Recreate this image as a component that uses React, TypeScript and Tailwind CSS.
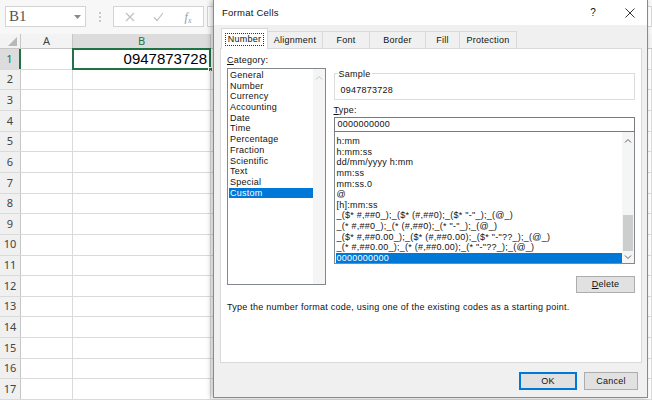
import { FC } from "react";

const font = "font-['Noto_Sans',sans-serif]";
const uiFont = "font-['Liberation_Sans',Arial,sans-serif]";

const categories = [
  "General",
  "Number",
  "Currency",
  "Accounting",
  "Date",
  "Time",
  "Percentage",
  "Fraction",
  "Scientific",
  "Text",
  "Special",
  "Custom",
];

const formats = [
  "h:mm",
  "h:mm:ss",
  "dd/mm/yyyy h:mm",
  "mm:ss",
  "mm:ss.0",
  "@",
  "[h]:mm:ss",
  '_($* #,##0_);_($* (#,##0);_($* "-"_);_(@_)',
  '_(* #,##0_);_(* (#,##0);_(* "-"_);_(@_)',
  '_($* #,##0.00_);_($* (#,##0.00);_($* "-"??_);_(@_)',
  '_(* #,##0.00_);_(* (#,##0.00);_(* "-"??_);_(@_)',
  "0000000000",
];

const tabs = [
  { label: "Number", w: "w-[47px]" },
  { label: "Alignment", w: "w-[55px]" },
  { label: "Font", w: "w-[47px]" },
  { label: "Border", w: "w-[56px]" },
  { label: "Fill", w: "w-[34px]" },
  { label: "Protection", w: "w-[57px]" },
];

const rows = Array.from({ length: 17 }, (_, i) => i + 1);

const Chevron: FC<{ up?: boolean; color?: string }> = ({ up, color = "#606060" }) => (
  <svg width="8" height="5" viewBox="0 0 8 5">
    <path d={up ? "M1 4.5 L4 1.5 L7 4.5" : "M1 0.5 L4 3.5 L7 0.5"} stroke={color} strokeWidth="1" fill="none" />
  </svg>
);

const Sheet: FC = () => (
  <div className="flex h-full w-full flex-col bg-white">
    {/* formula bar */}
    <div className="flex h-[37px] items-start bg-[#f7f7f7] pl-[5px] pt-[6px]">
      <div className="flex h-[21px] w-[81px] items-center justify-between border border-[#d4d4d4] bg-white pl-[3px] pr-[4px]">
        <span className="font-['Liberation_Serif',serif] text-[15px] leading-none text-[#555]">B1</span>
        <svg width="7" height="4" viewBox="0 0 7 4">
          <path d="M0 0 L7 0 L3.5 4 Z" fill="#8a8a8a" />
        </svg>
      </div>
      <div className="flex h-[21px] w-[27px] flex-col items-center justify-center gap-[2px]">
        <span className="h-[2px] w-[2px] bg-[#c8c8c8]" />
        <span className="h-[2px] w-[2px] bg-[#c8c8c8]" />
        <span className="h-[2px] w-[2px] bg-[#c8c8c8]" />
      </div>
      <div className="flex h-[21px] w-[91px] items-center border border-[#d4d4d4] bg-white">
        <div className="flex w-[30px] justify-center pl-[2px]">
          <svg width="10" height="10" viewBox="0 0 10 10">
            <path d="M1 1 L9 9 M9 1 L1 9" stroke="#c0c0c0" strokeWidth="1.2" />
          </svg>
        </div>
        <div className="flex w-[29px] justify-center">
          <svg width="11" height="10" viewBox="0 0 11 10">
            <path d="M1 5.5 L4 8.5 L10 1" stroke="#c0c0c0" strokeWidth="1.2" fill="none" />
          </svg>
        </div>
        <div className="flex w-[30px] justify-center">
          <span className="font-['Liberation_Serif',serif] text-[12px] italic leading-none text-[#9a9a9a]">
            f<sub className="text-[8px]">x</sub>
          </span>
        </div>
      </div>
      <div className="ml-[3px] h-[21px] flex-1 border border-[#d4d4d4] bg-white" />
    </div>

    {/* column headers */}
    <div className="flex h-[15px] border-b border-[#c6c6c6] bg-[#f3f3f3] text-[11px] leading-[14px] text-[#444]">
      <div className="flex w-[21px] items-end justify-end border-r border-[#c6c6c6] pb-[2px] pr-[3px]">
        <svg width="9" height="9" viewBox="0 0 9 9">
          <path d="M9 0 L9 9 L0 9 Z" fill="#b8b8b8" />
        </svg>
      </div>
      <div className={`w-[52px] border-r border-[#c6c6c6] text-center ${font}`}>A</div>
      <div className={`w-[138px] border-r border-[#c6c6c6] bg-[#dcdcdc] text-center text-[#217346] ${font}`}>B</div>
      <div className="flex-1" />
    </div>

    {/* rows */}
    {rows.map((r) => (
      <div key={r} className="flex h-[20.65px] shrink-0 border-b border-[#dadada]">
        <div
          className={`flex w-[21px] items-center justify-center text-[11px] ${font} ${
            r === 1
              ? "border-r-2 border-[#217346] bg-[#dcdcdc] text-[#217346]"
              : "border-r border-[#c6c6c6] bg-[#f0f0f0] text-[#444]"
          }`}
        >
          {r}
        </div>
        <div className="w-[52px] border-r border-[#dadada]" />
        <div className="relative w-[138px] border-r border-[#dadada]">
          {r === 1 && (
            <>
              <div className="absolute inset-[-1px] flex items-center justify-end border-2 border-[#217346] pr-[2px]">
                <span className="font-['Liberation_Sans',sans-serif] text-[15px] leading-none text-black">
                  0947873728
                </span>
              </div>
              <div className="absolute bottom-[-3px] right-[-3px] h-[5px] w-[5px] border border-white bg-[#217346]" />
            </>
          )}
        </div>
        <div className="flex-1 border-r border-[#dadada]" />
      </div>
    ))}
  </div>
);

const ListScrollbar: FC<{ thumb?: boolean }> = ({ thumb }) => (
  <div className="flex w-[12px] flex-col items-center bg-[#f5f5f5]">
    <div className="flex h-[14px] items-center justify-center pt-[2px]">
      <Chevron up color={thumb ? "#606060" : "#c4c4c4"} />
    </div>
    {thumb ? (
      <>
        <div className="flex-1" />
        <div className="h-[36px] w-[10px] bg-[#cdcdcd]" />
        <div className="flex h-[12px] items-center justify-center">
          <Chevron color="#606060" />
        </div>
      </>
    ) : (
      <div className="flex-1" />
    )}
  </div>
);

const FormatCellsDialog: FC = () => (
  <div
    className={`absolute left-[213px] top-0 flex h-[398px] w-[435px] flex-col border-x border-b border-[#8a8a8a] bg-[#f0f0f0] text-[9px] tracking-[0.25px] text-[#111] shadow-[-2px_0_5px_rgba(0,0,0,0.25)] ${uiFont}`}
  >
    {/* title bar */}
    <div className="flex h-[25px] items-center bg-white pl-[8px]">
      <span className="text-[9.5px] leading-none">Format Cells</span>
      <div className="flex-1" />
      <span className="mr-[29px] text-[10px] leading-none">?</span>
      <svg width="10" height="10" viewBox="0 0 10 10" className="mr-[12px]">
        <path d="M0.5 0.5 L9.5 9.5 M9.5 0.5 L0.5 9.5" stroke="#222" strokeWidth="0.9" />
      </svg>
    </div>

    {/* tabs */}
    <div className="flex h-[23px] items-end pl-[7px]">
      {tabs.map((t, i) =>
        i === 0 ? (
          <div
            key={t.label}
            className={`relative z-10 mb-[-1px] flex h-[21px] ${t.w} items-center justify-center border-x border-t border-[#d9d9d9] bg-white`}
          >
            <span className="border border-dotted border-[#333] px-[2px] leading-[11px]">{t.label}</span>
          </div>
        ) : (
          <div
            key={t.label}
            className={`flex h-[17px] ${t.w} items-center justify-center border-r border-t border-[#d9d9d9] bg-[#f0f0f0] leading-[11px]`}
          >
            {t.label}
          </div>
        )
      )}
    </div>

    {/* panel */}
    <div className="ml-[6px] flex h-[315px] w-[422px] flex-col border border-[#d9d9d9] bg-white px-[6px] pt-[5px]">
      <div className="flex gap-[8px]">
        {/* category */}
        <div className="flex w-[99px] flex-col">
          <div className="h-[14px] leading-[12px]">
            <span className="underline">C</span>ategory:
          </div>
          <div className="flex h-[217px] border border-[#828790]">
            <div className="flex-1 pl-[1px] pt-[1px]">
              {categories.map((c) => (
                <div
                  key={c}
                  className={`h-[10.7px] pl-[1px] leading-[10.7px] ${c === "Custom" ? "bg-[#0078d7] text-white" : ""}`}
                >
                  {c}
                </div>
              ))}
            </div>
            <ListScrollbar />
          </div>
        </div>

        {/* right column */}
        <div className="flex w-[303px] flex-col">
          <div className="relative mt-[19px] h-[27px] border border-[#dcdcdc]">
            <span className="absolute left-[3px] top-[-6px] bg-white px-[1px] leading-[12px]">Sample</span>
            <div className="pl-[6px] pt-[10px] leading-[12px]">0947873728</div>
          </div>
          <div className="mt-[4px] h-[13px] leading-[12px]">
            <span className="underline">T</span>ype:
          </div>
          <div className="h-[15px] border border-[#7a7a7a] pl-[3px] leading-[13px]">0000000000</div>
          <div className="flex h-[132px] border border-t-0 border-[#828790]">
            <div className="flex-1 overflow-hidden pl-[1px] pt-[4px]">
              {formats.map((f) => (
                <div
                  key={f}
                  className={`h-[10.64px] whitespace-pre pl-[1px] leading-[10.64px] ${
                    f === "0000000000" ? "bg-[#0078d7] text-white" : ""
                  }`}
                >
                  {f}
                </div>
              ))}
            </div>
            <ListScrollbar thumb />
          </div>
          <div className="mt-[12px] flex justify-end">
            <div className="flex h-[17px] w-[59px] items-center justify-center border border-[#adadad] bg-[#e1e1e1] leading-none">
              <span>
                <span className="underline">D</span>elete
              </span>
            </div>
          </div>
        </div>
      </div>
      <div className="mt-[8px] leading-[12px]">
        Type the number format code, using one of the existing codes as a starting point.
      </div>
    </div>

    {/* buttons */}
    <div className="mt-[9px] flex justify-end gap-[7px] pr-[9px]">
      <div className="flex h-[18px] w-[58px] items-center justify-center border-2 border-[#0078d7] bg-[#e1e1e1] leading-none">
        OK
      </div>
      <div className="flex h-[18px] w-[54px] items-center justify-center border border-[#adadad] bg-[#e1e1e1] leading-none">
        Cancel
      </div>
    </div>
  </div>
);

export default function App() {
  return (
    <div className="relative h-[400px] w-[652px] overflow-hidden bg-white">
      <Sheet />
      <FormatCellsDialog />
    </div>
  );
}
